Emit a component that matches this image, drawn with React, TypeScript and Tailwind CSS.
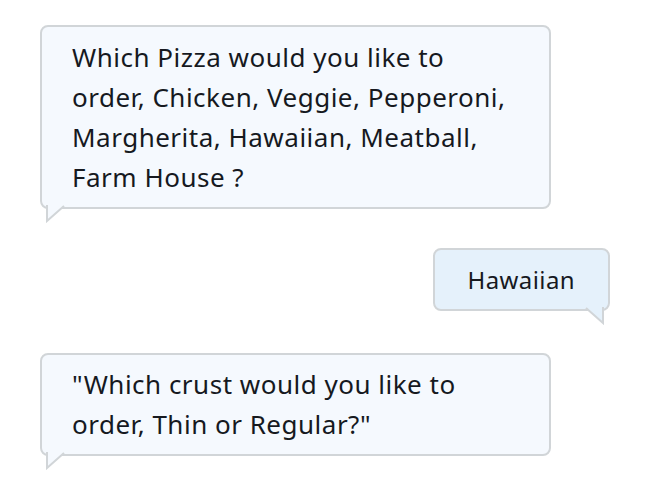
const font = { fontFamily: '"Noto Sans", "Open Sans", Arial, sans-serif' }

interface BubbleProps {
  lines: string[]
  side: 'left' | 'right'
  className?: string
}

function Tail({ side, fill }: { side: 'left' | 'right'; fill: string }) {
  if (side === 'left') {
    return (
      <svg
        className="absolute left-[4px] top-full -mt-[2px]"
        width="22"
        height="18"
        viewBox="0 0 22 18"
      >
        <polygon points="1,0 1,16 19,0" fill={fill} />
        <polyline points="1,0 1,16 18,1" fill="none" stroke="#d1d5d8" strokeWidth="2" />
      </svg>
    )
  }
  return (
    <svg
      className="absolute right-[4px] top-full -mt-[2px]"
      width="22"
      height="18"
      viewBox="0 0 22 18"
    >
      <polygon points="21,0 21,16 3,0" fill={fill} />
      <polyline points="21,0 21,16 4,1" fill="none" stroke="#d1d5d8" strokeWidth="2" />
    </svg>
  )
}

function Bubble({ lines, side, className = '' }: BubbleProps) {
  const isBot = side === 'left'
  const fill = isBot ? '#f5f9fe' : '#e5f1fb'
  return (
    <div
      className={`relative rounded-lg border-2 border-[#d1d5d8] ${
        isBot ? 'w-[511px] bg-[#f5f9fe] pl-[30px]' : 'self-end bg-[#e5f1fb] px-[33px]'
      } ${className}`}
    >
      {lines.map((line, i) => (
        <div
          key={i}
          className={`whitespace-nowrap leading-[40px] text-[#16191f] ${
            isBot ? 'text-[26px] tracking-[0.5px]' : 'text-[24px] tracking-[0.4px]'
          }`}
        >
          {line}
        </div>
      ))}
      <Tail side={side} fill={fill} />
    </div>
  )
}

export default function App() {
  return (
    <div className="w-[658px] h-[492px] bg-white" style={font}>
      <div className="flex flex-col pl-[40px] pr-[48px] pt-[25px]">
        <Bubble
          side="left"
          className="py-[10px]"
          lines={[
            'Which Pizza would you like to',
            'order, Chicken, Veggie, Pepperoni,',
            'Margherita, Hawaiian, Meatball,',
            'Farm House ?',
          ]}
        />
        <Bubble side="right" className="mt-[39px] pt-[10px] pb-[9px]" lines={['Hawaiian']} />
        <Bubble
          side="left"
          className="mt-[42px] pt-[9px] pb-[10px]"
          lines={['"Which crust would you like to', 'order, Thin or Regular?"']}
        />
      </div>
    </div>
  )
}
